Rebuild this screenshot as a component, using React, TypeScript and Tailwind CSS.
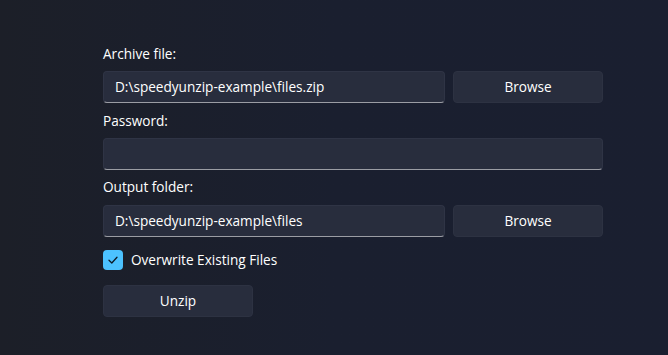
import React from "react";

const font = { fontFamily: '"Segoe UI", "Open Sans", "Noto Sans", sans-serif' };

function TextBox({ value, className = "" }: { value: string; className?: string }) {
  return (
    <div
      className={`h-8 rounded-[4px] bg-[#282d3d] border border-[#2f3445] border-b-[#9b9da4] flex items-center px-[11px] text-[13.6px] text-[#ffffff] ${className}`}
    >
      {value}
    </div>
  );
}

function Button({ label, className = "" }: { label: string; className?: string }) {
  return (
    <div
      className={`h-8 rounded-[4px] bg-[#282d3d] border border-[#2d3242] flex items-center justify-center text-[13.6px] text-[#ffffff] ${className}`}
    >
      {label}
    </div>
  );
}

export default function App() {
  return (
    <div
      className="w-[668px] h-[355px] overflow-hidden bg-gradient-to-r from-[#1c1f28] via-[#1a1f2f] to-[#1a1f30]"
      style={font}
    >
      <div className="pt-[44px] pl-[103px] w-[603px] box-content flex flex-col">
        <div className="text-[13.6px] text-white leading-[20px] h-[20px]">Archive file:</div>
        <div className="mt-[7px] flex gap-2">
          <TextBox value="D:\speedyunzip-example\files.zip" className="w-[342px]" />
          <Button label="Browse" className="w-[150px]" />
        </div>
        <div className="mt-[8px] text-[13.6px] text-white leading-[20px] h-[20px]">Password:</div>
        <div className="mt-[7px]">
          <TextBox value="" className="w-[500px]" />
        </div>
        <div className="mt-[7px] text-[13.6px] text-white leading-[20px] h-[20px]">Output folder:</div>
        <div className="mt-[8px] flex gap-2">
          <TextBox value="D:\speedyunzip-example\files" className="w-[342px]" />
          <Button label="Browse" className="w-[150px]" />
        </div>
        <div className="mt-[13px] flex items-center gap-[8px]">
          <div className="w-5 h-5 rounded-[4px] bg-[#4cc2ff] flex items-center justify-center">
            <svg width="12" height="12" viewBox="0 0 12 12" fill="none">
              <path d="M2 6.3 L4.8 9 L10 3.2" stroke="#0b1a26" strokeWidth="1.3" strokeLinecap="round" strokeLinejoin="round" />
            </svg>
          </div>
          <span className="text-[13.6px] text-white">Overwrite Existing Files</span>
        </div>
        <div className="mt-[15px]">
          <Button label="Unzip" className="w-[150px]" />
        </div>
      </div>
    </div>
  );
}
